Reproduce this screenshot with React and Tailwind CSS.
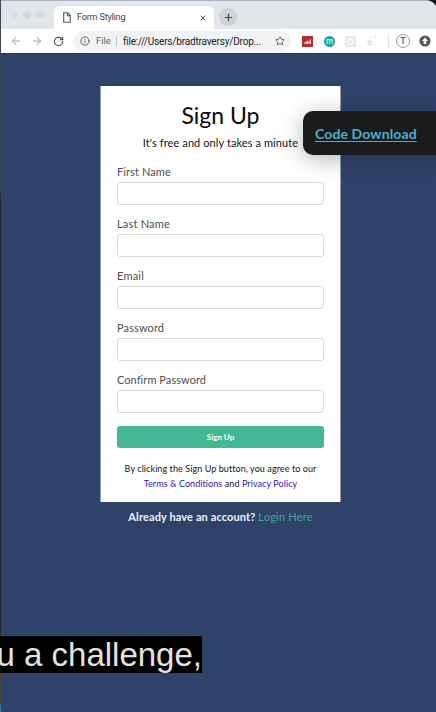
import React from "react";
import { ArrowLeft, ArrowRight, RotateCw, Info, Star, Plus, X } from "lucide-react";

const fields = [
  { label: "First Name", type: "text", tracking: "tracking-[0.1px]" },
  { label: "Last Name", type: "text", tracking: "tracking-[0.2px]" },
  { label: "Email", type: "email", tracking: "tracking-[0.2px]" },
  { label: "Password", type: "password", tracking: "tracking-[0.12px]" },
  { label: "Confirm Password", type: "password", tracking: "tracking-[0.06px]" },
];

function TabStrip() {
  return (
    <div className="flex h-[29px] items-end bg-[#e2e5ea] border-t border-[#a9b4c4]">
      <div className="flex h-full w-[53px] items-center gap-[5px] pl-[9px]">
        <span className="size-2 rounded-full bg-[#dcdee1]" />
        <span className="size-2 rounded-full bg-[#d5d7da]" />
        <span className="size-2 rounded-full bg-[#d5d7da]" />
      </div>
      <div className="flex h-[23px] w-[160px] items-center rounded-t-[6px] bg-white pl-[9px] pr-[7px]">
        <svg width="8" height="11" viewBox="0 0 8 11" fill="none" stroke="#55585b" strokeWidth="1.1">
          <path d="M.7.7h4L7.3 3.4v6.8H.7ZM4.5.7v3h2.8" />
        </svg>
        <span className="ml-[6px] whitespace-nowrap font-['Roboto',sans-serif] text-[9px] tracking-[-0.15px] text-[#404347]">Form Styling</span>
        <X className="ml-auto size-[8px] text-[#505357]" strokeWidth={3} />
      </div>
      <div className="mb-[3px] ml-[5px] flex size-[18px] items-center justify-center rounded-full bg-[#cfd2d6]">
        <Plus className="size-[11px] text-[#3e4246]" strokeWidth={2.6} />
      </div>
    </div>
  );
}

function Toolbar() {
  return (
    <div className="flex h-6 items-center bg-white pl-[9px]">
      <ArrowLeft className="size-3 text-[#a3a5a8]" strokeWidth={2.1} />
      <ArrowRight className="ml-[9px] size-3 text-[#a3a5a8]" strokeWidth={2.1} />
      <RotateCw className="ml-[10px] size-[11px] text-[#54575a]" strokeWidth={2.7} />
      <div className="ml-[9px] flex h-[20px] w-[218px] items-center rounded-full bg-[#f1f2f3] pl-[7px] pr-[6px] font-['Roboto',sans-serif] text-[10px]">
        <Info className="size-[10px] text-[#606367]" strokeWidth={2.4} />
        <span className="ml-[6px] text-[9.5px] text-[#606367]">File</span>
        <span className="ml-[5px] h-[10px] w-px bg-[#bfc1c3]" />
        <span className="ml-[6px] whitespace-nowrap text-[#202225] tracking-[-0.18px]">file:///Users/bradtraversy/Drop...</span>
        <Star className="ml-auto size-[10px] text-[#606367]" strokeWidth={2.4} />
      </div>
      <svg className="ml-[11px] shrink-0" width="11" height="11" viewBox="0 0 11 11">
        <path fill="#b32d32" d="M0 0h11v11H0z" />
        <path fill="none" stroke="#f0d8d8" strokeWidth="1.4" d="M2.3 7h6V3.6M4.4 6.3 6.5 5" />
      </svg>
      <span className="ml-[11px] flex size-[11px] shrink-0 items-center justify-center rounded-full bg-[#15aaa0] font-['Inter',sans-serif] text-[8px] font-semibold leading-none text-[#c4efeb]">m</span>
      <svg className="ml-[10px] shrink-0" width="11" height="11" viewBox="0 0 11 11" fill="none" stroke="#e4e5e6">
        <path fill="#eaebec" d="M.5.5h10v10H.5z" />
        <circle cx="5.5" cy="5.5" r="2.7" stroke="#f7f7f7" strokeWidth="1.5" />
      </svg>
      <svg className="ml-[10px] shrink-0" width="12" height="12" viewBox="0 0 12 12" fill="none" stroke="#dfe0e2">
        <path fill="#e5e6e8" stroke="none" d="M1 6 4 4l2 3-1 4-3-1Z" />
        <circle cx="8" cy="8" r="2" stroke="#ececed" />
        <path d="M3 2.5h2M8 1.5h2v2" />
      </svg>
      <span className="ml-[10px] h-[11px] w-px bg-[#dfe0e2]" />
      <span className="ml-[7px] flex size-[14px] shrink-0 items-center justify-center rounded-full border border-[#8b9a9f] font-['Roboto',sans-serif] text-[9px] font-medium leading-none text-[#4f6066]">T</span>
      <svg className="ml-[9px] shrink-0" width="12" height="12" viewBox="0 0 12 12">
        <circle cx="6" cy="6" r="5.6" fill="#56585a" />
        <path fill="white" d="M6 2.6 9 6H7.3v3H4.7V6H3Z" />
      </svg>
    </div>
  );
}

function SignUpForm() {
  return (
    <form className="ml-[99px] flex h-[416px] w-[241px] flex-col border-x border-[#939db2] bg-white px-[16px] pt-[15px]">
      <h1 className="whitespace-nowrap text-center text-[23px] leading-[28px] text-[#080808]">Sign Up</h1>
      <p className="mt-[6px] whitespace-nowrap text-center text-[11px] leading-4 tracking-[0.09px] text-[#151515]">It's free and only takes a minute</p>
      <div className="mt-[13px] flex flex-col gap-[11px]">
        {fields.map((field) => (
          <label key={field.label} className="flex h-[41px] flex-col text-[11px] leading-4 text-[#4e4e4e]">
            <span className={"whitespace-nowrap " + field.tracking}>{field.label}</span>
            <input type={field.type} className="mt-[2px] h-[23px] w-full shrink-0 rounded-[3px] border border-[#d9dadd] bg-white outline-none" />
          </label>
        ))}
      </div>
      <button type="button" className="mt-[13px] h-[22px] w-full shrink-0 rounded-[3px] bg-[#43b894] text-[8px] font-bold leading-none text-white">Sign Up</button>
      <p className="mt-[13px] whitespace-nowrap text-center text-[9px] leading-[15px] tracking-[0.08px] text-[#151515]">
        By clicking the Sign Up button, you agree to our
        <br />
        <a className="text-[#2517bd]">Terms &amp; Conditions</a> and <a className="text-[#2517bd]">Privacy Policy</a>
      </p>
    </form>
  );
}

export default function App() {
  return (
    <div className="relative h-[712px] w-[436px] overflow-hidden bg-[#2f4269] font-['Lato',sans-serif]">
      <div className="flex h-full">
        <div className="flex w-px shrink-0 flex-col">
          <span className="h-[193px] bg-[#3d4656]" />
          <span className="grow bg-[#24272e]" />
          <span className="h-[70px] bg-[#51452f]" />
          <span className="h-[7px] bg-[#3c7893]" />
        </div>
        <div className="min-w-0 grow">
          <TabStrip />
          <Toolbar />
          <main className="border-t border-[#24365e] pt-[32px]">
            <SignUpForm />
            <p className="mt-[7px] ml-[99px] w-[241px] whitespace-nowrap text-center text-[11px] leading-4 text-[#f0f3f8]">
              <span className="font-bold tracking-[0.12px]">Already have an account? </span>
              <a className="tracking-[0.2px] text-[#3bab91]">Login Here</a>
            </p>
          </main>
        </div>
      </div>
      <svg className="absolute right-0 top-0" width="9" height="6" viewBox="0 0 9 6">
        <path d="M0 0h9v6Q6 1 0 0Z" fill="#15181c" />
      </svg>
      <div className="absolute left-[303px] top-[111px] flex h-[44px] w-[145px] items-center rounded-[10px] bg-[#191b1d] pl-[12px] shadow-[0_4px_22px_rgba(20,25,45,0.32)]">
        <a className="whitespace-nowrap pt-px text-[14px] font-bold tracking-[0.12px] text-[#4eb1cc] underline decoration-1 underline-offset-2">Code Download</a>
      </div>
      <div className="absolute left-0 top-[636px] flex h-[37px] w-[202px] items-center justify-end overflow-hidden bg-black font-['Liberation_Sans',sans-serif] text-[33px] leading-[37px] text-[#e4e2df]">
        <span className="whitespace-nowrap">u a challenge,</span>
      </div>
    </div>
  );
}
